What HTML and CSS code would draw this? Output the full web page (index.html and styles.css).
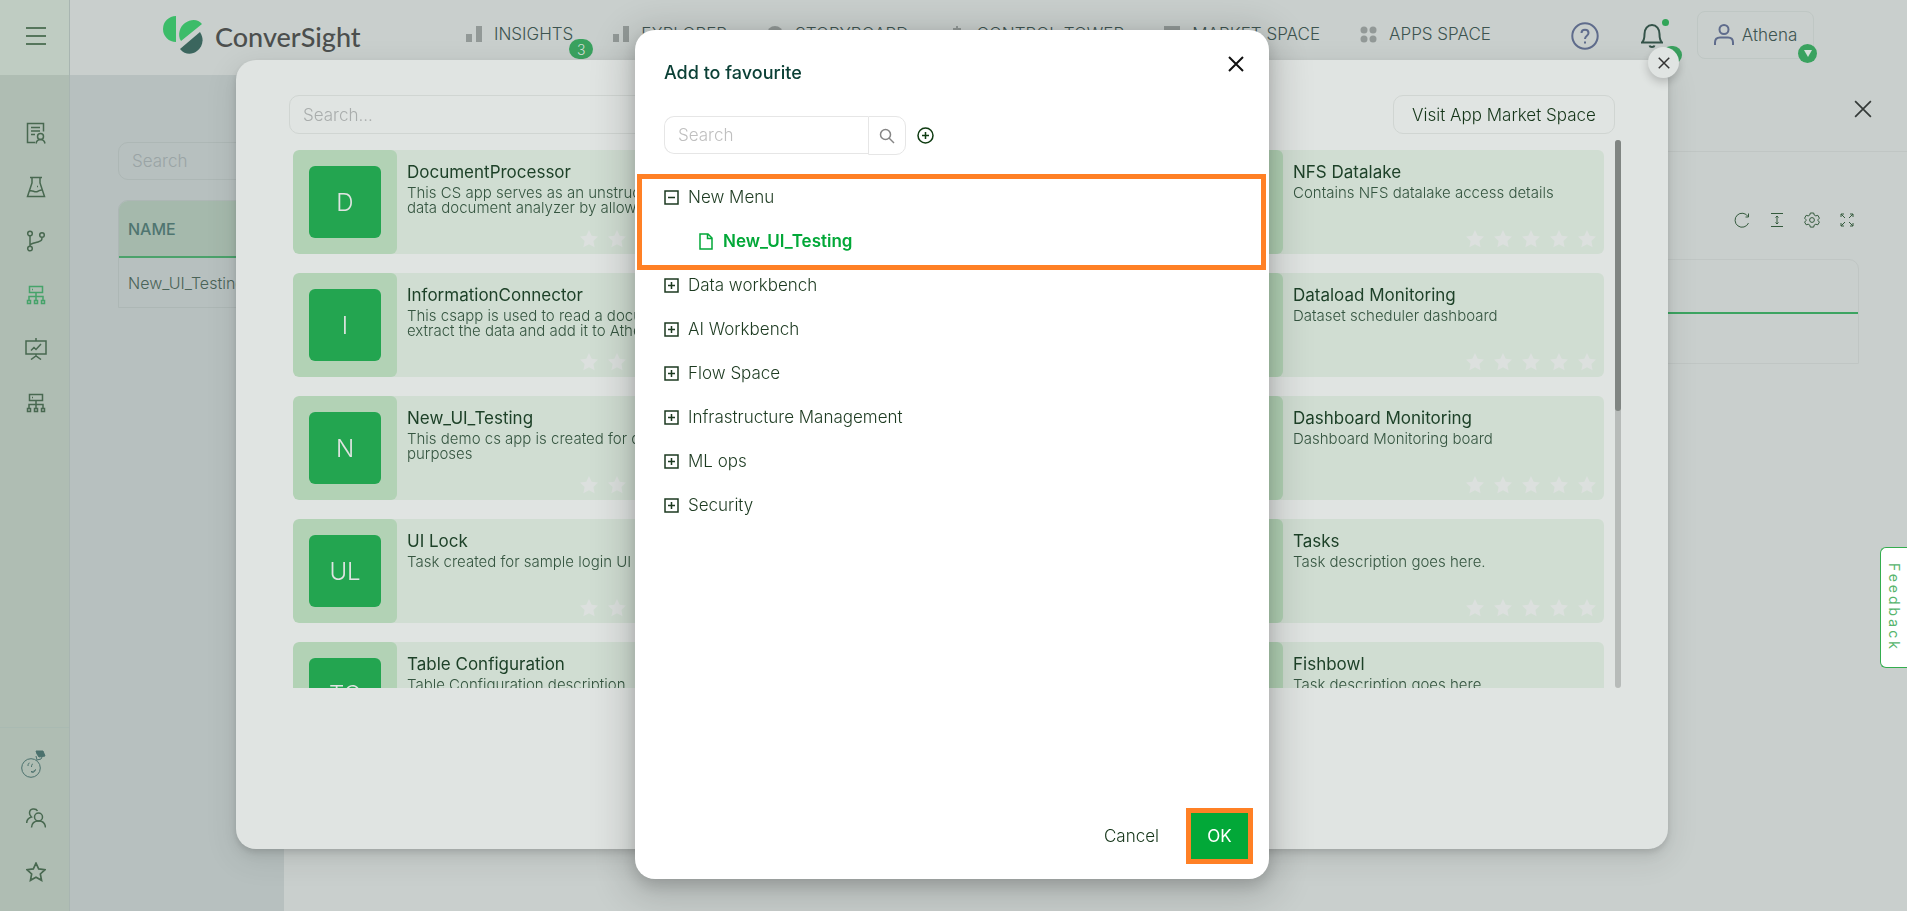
FILE: index.html
```html
<!DOCTYPE html>
<html lang="en">
<head>
<meta charset="utf-8">
<title>ConverSight</title>
<link rel="stylesheet" href="styles.css">
</head>
<body>
<svg class="sprite" aria-hidden="true">
  <symbol id="i-x" viewBox="0 0 16 16"><path d="M1 1l14 14M15 1L1 15"/></symbol>
  <symbol id="i-star" viewBox="0 0 18 18"><path d="M9 0l2.7 5.8 6.3.8-4.600 4.400 1.200 6.300L9 14.200l-5.600 3.100 1.200-6.300L0 6.600l6.300-.8z"/></symbol>
  <symbol id="i-stars" viewBox="0 0 130 18"><use href="#i-star" width="18" height="18"/><use href="#i-star" x="28" width="18" height="18"/><use href="#i-star" x="56" width="18" height="18"/><use href="#i-star" x="84" width="18" height="18"/><use href="#i-star" x="112" width="18" height="18"/></symbol>
  <symbol id="i-net" viewBox="0 0 20 20"><path d="M3.500 1.500h13v6h-13zM6 4.500h1M10 7.500v8M3 15.500v-4h14v4M6 11.500h8M1.500 15.500h3v3h-3zM8.500 15.500h3v3h-3zM15.500 15.500h3v3h-3z"/></symbol>
  <symbol id="i-bars" viewBox="0 0 16 16"><path d="M0 8h6v8H0zM10 0h6v16h-6z"/></symbol>
  <symbol id="i-plus" viewBox="0 0 15 15"><path d="M1 1h13v13H1zM4 7.500h7M7.500 4v7"/></symbol>
  <symbol id="i-minus" viewBox="0 0 15 15"><path d="M1 1h13v13H1zM4 7.500h7"/></symbol>
</svg>

<div class="app">
  <aside class="sidebar">
    <div class="sidebar-head"><button class="icon-btn" aria-label="Menu"><svg class="line" width="20" height="20" viewBox="0 0 20 20"><path d="M0 2h20M0 10h20M0 18h20"/></svg></button></div>
    <nav class="side-nav" aria-label="Workspaces">
      <a href="#" aria-label="Records"><svg class="line" width="20" height="22" viewBox="0 0 20 22"><path d="M9 20.500H1.500v-19h16v8M5 5.500h9M5 9h9M5 12.500h4"/><circle cx="14.500" cy="14.500" r="3"/><path d="M10 21.500c.5-2.500 2-4 4.500-4s4 1.500 4.500 4"/></svg></a>
      <a href="#" aria-label="Lab"><svg class="line" width="20" height="22" viewBox="0 0 20 22"><path d="M4 1.500h12M6 1.500V7L1.500 20.500h17L14 7V1.500M3.500 15c3-1.500 5 2 8 .5s3-2 5-1.500M11 10.500h1"/></svg></a>
      <a href="#" aria-label="Flow"><svg class="line" width="20" height="22" viewBox="0 0 20 22"><circle cx="4" cy="3.500" r="2.300"/><circle cx="16" cy="5" r="2.300"/><circle cx="4" cy="18.500" r="2.300"/><path d="M4 6v10M16 7.500c0 3-1 3.500-4 4.500s-7 1.500-8 3"/></svg></a>
      <a href="#" class="active" aria-label="Infrastructure"><svg class="line" width="20" height="20"><use href="#i-net"/></svg></a>
      <a href="#" aria-label="ML ops"><svg class="line" width="22" height="22" viewBox="0 0 22 22"><path d="M1 3h20v13H1zM11 0v3M11 16v2M6 21.500l5-3.500 5 3.500M6 12.500l3-3 2 2 5-5.500"/></svg></a>
      <a href="#" aria-label="Network"><svg class="line" width="20" height="20"><use href="#i-net"/></svg></a>
    </nav>
    <nav class="side-foot" aria-label="Shortcuts">
      <a href="#" class="teal" aria-label="Assistant"><svg class="line thin" width="26" height="28" viewBox="0 0 26 28"><circle cx="11" cy="18" r="9.300"/><path d="M8 16c0-2 .5-3 1.500-3M11.500 17c0-2 .5-3 1.500-3M11 21.500c2 .5 3.500-.5 4.500-2-.3 2.500-3 4-4.500 2z"/><path class="solid" d="M16 1l7 0 2 5-6 1-2-3z"/><path d="M16 6l1 4 4-1 1-2"/></svg></a>
      <a href="#" aria-label="Users"><svg class="line" width="20" height="20" viewBox="0 0 20 20"><circle cx="12.500" cy="9" r="4"/><path d="M5.500 19.500c.3-4 3-6.500 7-6.500s6.700 2.500 7 6.500M11.500 3C10 0 3.500 0 3.500 5c0 2 1 3 2 4C2 10 .7 12 .7 15"/></svg></a>
      <a href="#" aria-label="Favourites"><svg class="line" width="20" height="20" viewBox="0 0 18 18"><path d="M9 1l2.400 5.200 5.700.7-4.200 3.900 1.100 5.700L9 13.700l-5 2.800 1.100-5.700L.9 6.900l5.700-.7z"/></svg></a>
    </nav>
  </aside>

  <div class="page">
    <header class="topbar">
      <a href="#" class="brand"><svg width="40" height="38" viewBox="0 0 40 38"><path fill="#3cbc69" d="M13 0v26A13 13 0 0 1 13 0zM18 25C14 19 17 10 22 7c6-4 13-4 17 1z"/><path fill="#3b665e" d="M37 16c5 8 2 15-3 19s-12 4-17-2z"/></svg><span>ConverSight</span></a>
      <nav class="main-nav" aria-label="Main">
        <a href="#"><svg class="fill" width="16" height="16"><use href="#i-bars"/></svg>INSIGHTS<span class="badge count">3</span></a>
        <a href="#"><svg class="fill" width="16" height="16"><use href="#i-bars"/></svg>EXPLORER</a>
        <a href="#"><svg class="fill" width="16" height="16" viewBox="0 0 16 16"><circle cx="8" cy="8" r="8"/></svg>STORYBOARD</a>
        <a href="#"><svg class="fill" width="16" height="16" viewBox="0 0 16 16"><path d="M7 0h2v2h3v3H9v11H7V5H4V2h3z"/></svg>CONTROL TOWER</a>
        <a href="#"><svg class="fill" width="16" height="16" viewBox="0 0 16 16"><path d="M0 0h16v4h-5v12H5V4H0z"/></svg>MARKET SPACE</a>
        <a href="#"><svg class="fill" width="17" height="17" viewBox="0 0 17 17"><circle cx="4" cy="4" r="3.500"/><circle cx="13" cy="4" r="3.500"/><circle cx="4" cy="13" r="3.500"/><circle cx="13" cy="13" r="3.500"/></svg>APPS SPACE</a>
      </nav>
      <div class="user-area">
        <button class="icon-btn help" aria-label="Help"><svg class="line" width="28" height="28" viewBox="0 0 28 28"><circle cx="14" cy="14" r="12.700"/><path d="M10.500 11c0-4.500 7-4.500 7 0 0 3-3.500 2.500-3.500 6M14 19.500v2"/></svg></button>
        <button class="icon-btn bell" aria-label="Notifications"><svg class="line" width="22" height="26" viewBox="0 0 22 26"><path d="M1 19.500h20c-2-2-2.500-4-2.500-8.500 0-5-3-9-7.500-9s-7.500 4-7.500 9c0 4.500-.5 6.500-2.500 8.500zM8.500 22.500c.5 2 4.500 2 5 0"/></svg><span class="dot"></span><span class="badge behind"></span></button>
        <button class="user"><svg class="line" width="20" height="22" viewBox="0 0 20 22"><circle cx="10" cy="5.500" r="4.500"/><path d="M1 21v-2.500c0-3 2-5 5-5h8c3 0 5 2 5 5V21"/></svg>Athena<span class="badge caret"><svg width="8" height="7" viewBox="0 0 8 7"><path fill="#d5dfd8" d="M0 0h8L4 7z"/></svg></span></button>
      </div>
    </header>

    <div class="workspace">
      <section class="list-panel">
        <input class="field" type="text" placeholder="Search" aria-label="Search list">
        <table class="names">
          <thead><tr><th>NAME</th></tr></thead>
          <tbody><tr><td>New_UI_Testing</td></tr></tbody>
        </table>
      </section>
      <section class="detail">
        <div class="detail-head"><button class="icon-btn" aria-label="Close panel"><svg class="line" width="18" height="18"><use href="#i-x"/></svg></button></div>
        <div class="detail-body">
          <div class="tools">
            <button class="icon-btn" aria-label="Reload"><svg class="line" width="16" height="16" viewBox="0 0 16 16"><path d="M14 4.500A7 7 0 1 0 14.500 11M14.500 1.500v3.500h-3"/></svg></button>
            <button class="icon-btn" aria-label="Density"><svg class="line" width="16" height="16" viewBox="0 0 16 16"><path d="M2 1.500h12M2 14.500h12M8 4v8M6.500 5.500L8 4l1.500 1.500M6.500 10.500L8 12l1.500-1.500"/></svg></button>
            <button class="icon-btn" aria-label="Settings"><svg class="line" width="16" height="16" viewBox="0 0 16 16"><path d="M6.300 1h3.400l.5 2 1.600.9 2-.6 1.600 2.900-1.400 1.500v.9l1.400 1.500-1.600 2.700-2-.6-1.600.9-.5 2H6.300l-.5-2-1.600-.9-2 .6-1.600-2.700L2 8.600v-.9L.6 6.200l1.600-2.900 2 .6L5.800 3z"/><circle cx="8" cy="8" r="2.400"/></svg></button>
            <button class="icon-btn" aria-label="Full screen"><svg class="line" width="16" height="16" viewBox="0 0 16 16"><path d="M2 5V2h3M2 2l4 4M11 2h3v3M14 2l-4 4M2 11v3h3M2 14l4-4M11 14h3v-3M14 14l-4-4"/></svg></button>
          </div>
          <div class="sheet"><div class="sheet-head"></div><div class="sheet-row"></div></div>
        </div>
      </section>
    </div>
  </div>
</div>

<div class="layer apps-layer">
  <section class="apps-modal" role="dialog" aria-label="Apps">
    <button class="round-close" aria-label="Close apps"><svg class="line" width="12" height="12"><use href="#i-x"/></svg></button>
    <div class="apps-top">
      <input class="field" type="text" placeholder="Search..." aria-label="Search apps">
      <button class="visit">Visit App Market Space</button>
    </div>
    <div class="apps-scroll">
      <div class="cards">
        <article class="card"><div class="thumb"><span>D</span></div><div class="info"><h3>DocumentProcessor</h3><p>This CS app serves as an unstructured data document analyzer by allowing</p></div><svg class="stars"><use href="#i-stars"/></svg></article>
        <article class="card last"><div class="thumb"></div><div class="info"><h3>NFS Datalake</h3><p>Contains NFS datalake access details</p></div><svg class="stars"><use href="#i-stars"/></svg></article>
        <article class="card"><div class="thumb"><span>I</span></div><div class="info"><h3>InformationConnector</h3><p>This csapp is used to read a document, extract the data and add it to Athena</p></div><svg class="stars"><use href="#i-stars"/></svg></article>
        <article class="card last"><div class="thumb"></div><div class="info"><h3>Dataload Monitoring</h3><p>Dataset scheduler dashboard</p></div><svg class="stars"><use href="#i-stars"/></svg></article>
        <article class="card"><div class="thumb"><span>N</span></div><div class="info"><h3>New_UI_Testing</h3><p>This demo cs app is created for demo purposes</p></div><svg class="stars"><use href="#i-stars"/></svg></article>
        <article class="card last"><div class="thumb"></div><div class="info"><h3>Dashboard Monitoring</h3><p>Dashboard Monitoring board</p></div><svg class="stars"><use href="#i-stars"/></svg></article>
        <article class="card"><div class="thumb"><span>UL</span></div><div class="info"><h3>UI Lock</h3><p>Task created for sample login UI</p></div><svg class="stars"><use href="#i-stars"/></svg></article>
        <article class="card last"><div class="thumb"></div><div class="info"><h3>Tasks</h3><p>Task description goes here.</p></div><svg class="stars"><use href="#i-stars"/></svg></article>
        <article class="card"><div class="thumb"><span>TC</span></div><div class="info"><h3>Table Configuration</h3><p>Table Configuration description</p></div></article>
        <article class="card last"><div class="thumb"></div><div class="info"><h3>Fishbowl</h3><p>Task description goes here.</p></div></article>
      </div>
      <div class="track"><div class="grip"></div></div>
    </div>
  </section>
</div>

<div class="layer fav-layer">
  <section class="fav-modal" role="dialog" aria-labelledby="fav-title">
    <header class="fav-head">
      <h2 id="fav-title">Add to favourite</h2>
      <button class="icon-btn" aria-label="Close"><svg class="line" width="16" height="16"><use href="#i-x"/></svg></button>
    </header>
    <div class="fav-search">
      <input type="text" placeholder="Search" aria-label="Search menus">
      <button class="find" aria-label="Search"><svg class="line" width="16" height="16" viewBox="0 0 16 16"><circle cx="6.500" cy="6.500" r="5"/><path d="M10 10l5 5"/></svg></button>
      <button class="icon-btn add" aria-label="Add menu"><svg class="line" width="17" height="17" viewBox="0 0 17 17"><circle cx="8.500" cy="8.500" r="7.500"/><path d="M5 8.500h7M8.500 5v7"/></svg></button>
    </div>
    <ul class="tree">
      <li class="picked">
        <button class="node"><svg class="line" width="15" height="15"><use href="#i-minus"/></svg>New Menu</button>
        <ul><li><button class="node leaf"><svg class="line" width="14" height="17" viewBox="0 0 14 17"><path d="M1 1h8l4 4v11H1zM8.500 1v4.500H13"/></svg>New_UI_Testing</button></li></ul>
      </li>
      <li><button class="node"><svg class="line" width="15" height="15"><use href="#i-plus"/></svg>Data workbench</button></li>
      <li><button class="node"><svg class="line" width="15" height="15"><use href="#i-plus"/></svg>AI Workbench</button></li>
      <li><button class="node"><svg class="line" width="15" height="15"><use href="#i-plus"/></svg>Flow Space</button></li>
      <li><button class="node"><svg class="line" width="15" height="15"><use href="#i-plus"/></svg>Infrastructure Management</button></li>
      <li><button class="node"><svg class="line" width="15" height="15"><use href="#i-plus"/></svg>ML ops</button></li>
      <li><button class="node"><svg class="line" width="15" height="15"><use href="#i-plus"/></svg>Security</button></li>
    </ul>
    <footer class="fav-foot">
      <button class="cancel">Cancel</button>
      <button class="ok">OK</button>
    </footer>
  </section>
</div>

<button class="feedback">Feedback</button>
</body>
</html>
```

FILE: styles.css
```css
* { box-sizing: border-box; }
body { margin: 0; font-family: Inter, "Open Sans", sans-serif; font-size: 17px; font-weight: 300; color: #143518; overflow: hidden; }
button, input { font: inherit; color: inherit; }
button { background: none; border: 0; padding: 0; }
a { color: inherit; text-decoration: none; }
h2, h3, p, ul { margin: 0; padding: 0; }
ul { list-style: none; }
svg { display: block; flex: none; }
.sprite { position: absolute; width: 0; height: 0; }
.line { fill: none; stroke: currentColor; stroke-width: 1.500; }
.thin { stroke-width: 1; }
.solid { fill: currentColor; }
.fill { fill: #929997; }
.icon-btn { display: flex; align-items: center; justify-content: center; }

.app { display: flex; height: 100vh; background: #c9cfcd; }
.page { flex: 1; display: flex; flex-direction: column; min-width: 0; }

.sidebar { flex: none; width: 70px; display: flex; flex-direction: column; background: #afbdb3; border-right: 1px solid #a8b5b1; color: #486850; }
.sidebar-head { flex: none; height: 75px; display: flex; align-items: center; justify-content: center; background: #bfccc2; padding: 0 0 3px 3px; color: #35593b; }
.side-nav { flex: 1; display: flex; flex-direction: column; padding: 31px 0 0 3px; }
.side-nav a, .side-foot a { height: 54px; display: flex; align-items: center; justify-content: center; }
.side-nav .active { color: #46a36a; }
.side-foot { border-top: 1px solid #a9bab2; padding: 9px 0 12px 3px; }
.side-foot .teal { color: #4b716d; padding-right: 6px; }

.topbar { height: 75px; flex: none; display: flex; padding-left: 93px; padding-right: 93px; color: #3d5450; }
.brand { display: flex; gap: 12px; margin: 16px 0 0; height: 38px; width: 303px; font-size: 27px; font-weight: 500; font-family: Lato, sans-serif; line-height: 42px; color: #4c4f4e; }
.main-nav { flex: 1; display: flex; justify-content: space-between; align-items: flex-start; padding-top: 24px; }
.main-nav a { display: flex; align-items: center; gap: 12px; height: 20px; position: relative; white-space: nowrap; }
.badge { position: absolute; display: flex; align-items: center; justify-content: center; background: #3aa25f; color: #d5dfd8; border-radius: 10px; }
.count { right: -20px; top: 15px; width: 24px; height: 20px; font-size: 14px; }
.user-area { display: flex; padding: 11px 0 16px 80px; }
.help { width: 28px; height: 50px; color: #5f6c8c; }
.help .line { stroke-width: 2; }
.bell { position: relative; width: 22px; height: 50px; margin: 0 34px 0 42px; color: #345349; }
.bell .line { stroke-width: 2; }
.dot { position: absolute; right: -6px; top: 8px; width: 7px; height: 7px; border-radius: 50%; background: #31a558; }
.behind { width: 20px; height: 18px; right: -19px; top: 35px; }
.user { position: relative; width: 117px; height: 48px; border: 1px solid #bfc7c4; border-radius: 8px; display: flex; align-items: center; justify-content: center; gap: 8px; }
.user .line { color: #5f6c8c; stroke-width: 2; }
.caret { width: 19px; height: 19px; right: -4px; bottom: -5px; }

.workspace { flex: 1; display: flex; min-height: 0; }
.list-panel { width: 214px; padding: 67px 0 0 48px; background: #b7c0bf; overflow: hidden; }
.field { width: 400px; height: 38px; padding: 0 13px; border: 1px solid #adb7b5; border-radius: 10px; background: none; }
.field::placeholder { color: #9aa4a5; opacity: 1; }
.names { width: 400px; margin-top: 20px; border-collapse: separate; border-spacing: 0; border: 1px solid #adb7b5; border-radius: 10px 0 0 0; text-align: left; }
.names th { height: 57px; padding: 0 9px; background: #a5b9ac; border-bottom: 2px solid #4ba26b; border-radius: 9px 0 0 0; font-size: 16px; font-weight: 500; color: #4f7570; }
.names td { height: 49px; padding: 0 9px; font-size: 16px; color: #4a6357; }
.detail { flex: 1; display: flex; flex-direction: column; }
.detail-head { height: 77px; padding: 0 35px 9px 0; display: flex; align-items: center; justify-content: flex-end; border-bottom: 1px solid #c0c6c4; color: #343a38; }
.detail-body { padding: 60px 48px 0 20px; }
.tools { display: flex; justify-content: flex-end; gap: 19px; padding-right: 4px; color: #345a3d; }
.tools .line { stroke-width: 1; }
.sheet { margin-top: 31px; border: 1px solid #c0c6c4; border-radius: 0 10px 0 0; }
.sheet-head { height: 54px; border-bottom: 2px solid #3ca461; }
.sheet-row { height: 49px; }

.layer { position: fixed; inset: 0; display: flex; }
.apps-layer { padding: 60px 239px 62px 236px; }
.apps-modal { position: relative; flex: 1; display: flex; flex-direction: column; background: #e0e4e2; border-radius: 20px; padding: 35px 47px 161px 53px; box-shadow: 0 6px 16px rgba(0,0,0,.08), 0 3px 6px rgba(0,0,0,.1), 0 9px 28px 8px rgba(0,0,0,.06); }
.round-close { position: absolute; right: -11px; top: -13px; width: 31px; height: 31px; border-radius: 50%; background: #e0e4e2; display: flex; align-items: center; justify-content: center; color: #333; box-shadow: 0 4px 10px rgba(0,0,0,.2); }
.round-close .line { stroke-width: 2; }
.apps-top { display: flex; justify-content: space-between; padding-right: 6px; }
.apps-top .field { height: 39px; border-color: #d0d5d2; width: 420px; }
.apps-top .field::placeholder { color: #a9adac; }
.visit { width: 222px; height: 39px; border: 1px solid #d0d5d2; border-radius: 10px; }
.apps-scroll { flex: 1; min-height: 0; margin-top: 6px; display: flex; overflow: hidden; }
.cards { flex: 1; height: 0; display: grid; grid-template-columns: repeat(3, 1fr); grid-auto-rows: 104px; gap: 19px 18px; padding: 10px 11px 0 4px; }
.card { position: relative; display: flex; background: #d0ddd2; border-radius: 6px; overflow: hidden; grid-column: 1; }
.card.last { grid-column: 3; }
.thumb { flex: none; width: 104px; display: flex; align-items: center; justify-content: center; background: #b2d2b5; border-radius: 6px; }
.thumb span { width: 72px; height: 72px; border-radius: 6px; background: #23a550; color: #e0e4e2; font-size: 24px; display: flex; align-items: center; justify-content: center; }
.info { padding: 12px 10px 0; flex: 1; }
.info h3 { font-size: 17px; line-height: 20px; font-weight: 400; color: #1d4128; }
.info p { margin-top: 3px; font-size: 15px; line-height: 15px; color: #355540; }
.stars { position: absolute; right: 8px; bottom: 6px; width: 130px; height: 18px; fill: #dce0de; }
.track { width: 6px; border-radius: 3px; background: #b7bbb9; }
.grip { width: 6px; height: 271px; border-radius: 3px; background: #808582; }

.fav-layer { justify-content: center; padding: 30px 3px 32px 0; }
.fav-modal { width: 634px; background: #fff; border-radius: 20px; display: flex; flex-direction: column; box-shadow: 0 6px 16px rgba(0,0,0,.16), 0 9px 36px 12px rgba(0,0,0,.14); }
.fav-head { display: flex; justify-content: space-between; align-items: flex-start; padding: 26px 25px 0 29px; color: #111; }
.fav-head h2 { font-size: 18px; line-height: 34px; font-weight: 500; color: #0b4036; }
.fav-head .line { stroke-width: 2; }
.fav-search { display: flex; padding: 26px 29px 0; }
.fav-search input { width: 204px; height: 38px; padding: 0 13px; border: 1px solid #e6e6e6; border-right: 0; border-radius: 10px 0 0 10px; }
.fav-search input::placeholder { color: #bfbfbf; opacity: 1; }
.find { width: 38px; height: 39px; border: 1px solid #e6e6e6; border-radius: 0 10px 10px 0; display: flex; align-items: center; justify-content: center; color: #858585; }
.add { margin-left: 11px; color: #0f3b12; }
.tree { flex: 1; margin-top: 20px; }
.picked { position: relative; }
.picked::after { content: ""; position: absolute; inset: -1px 3px -7px 2px; border: 5px solid #ff8025; pointer-events: none; }
.node { display: flex; align-items: center; gap: 9px; height: 44px; padding-left: 29px; color: #1c3a20; }
.leaf { padding-left: 64px; gap: 10px; color: #02a838; font-weight: 600; }
.fav-foot { display: flex; justify-content: flex-end; align-items: center; gap: 27px; padding: 0 16px 15px 0; }
.ok { width: 67px; height: 56px; border: 5px solid #ff8025; background: #02a838; color: #fff; font-weight: 400; }

.feedback { position: fixed; right: 0; top: 60vh; width: 27px; height: 121px; border: 1px solid #34ad4e; border-right: 0; border-radius: 6px 0 0 6px; background: #fff; color: #56b46c; font-size: 14px; font-weight: 400; letter-spacing: 3px; writing-mode: vertical-rl; text-align: center; }
```
